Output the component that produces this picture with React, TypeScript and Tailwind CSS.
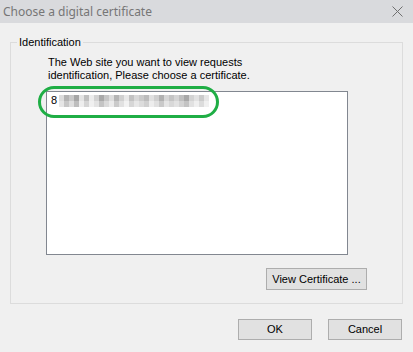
import React from "react";

const sans = "font-['Liberation_Sans',Arial,sans-serif]";

// pixelated blur that hides the certificate name (two rows of cells)
const topRow = [
  "#dcdcdc", "#b3b3b3", "#c8c8c8", "#a6a6a6", "#e4e4e4", "#c0c0c0", "#ececec", "#d2d2d2",
  "#a9a9a9", "#c6c6c6", "#dddddd", "#b5b5b5", "#d0d0d0", "#e8e8e8", "#c2c2c2", "#d8d8d8",
  "#cacaca", "#bcbcbc", "#e0e0e0", "#cfcfcf", "#b1b1b1", "#d6d6d6", "#c4c4c4", "#d4d4d4",
  "#bfbfbf", "#a8a8a8", "#d3d3d3", "#e2e2e2", "#cbcbcb", "#e6e6e6",
];
const bottomRow = [
  "#e6e6e6", "#c7c7c7", "#dedede", "#bdbdbd", "#eeeeee", "#d5d5d5", "#f0f0f0", "#e3e3e3",
  "#c4c4c4", "#dadada", "#ebebeb", "#cacaca", "#e1e1e1", "#f2f2f2", "#d6d6d6", "#e7e7e7",
  "#dcdcdc", "#d0d0d0", "#ededed", "#e0e0e0", "#c9c9c9", "#e5e5e5", "#d8d8d8", "#e2e2e2",
  "#d3d3d3", "#c3c3c3", "#e1e1e1", "#efefef", "#dcdcdc", "#f0f0f0",
];

function Button({ label, className }: { label: string; className: string }) {
  return (
    <button
      className={`${className} flex items-center justify-center border border-[#adadad] bg-[#e1e1e1] text-[11px] leading-none text-black ${sans}`}
    >
      {label}
    </button>
  );
}

export default function App() {
  return (
    <div className="flex h-[352px] w-[413px] flex-col bg-[#f0f0f0]">
      {/* title bar */}
      <div className="flex h-[23px] items-center justify-between bg-[#d9dadd] pl-[3px] pr-[10px]">
        <span className="font-['Noto_Sans',sans-serif] text-[12px] leading-none text-[#767676]">
          Choose a digital certificate
        </span>
        <svg width="11" height="11" viewBox="0 0 11 11">
          <path d="M0.5 0.5 L10.5 10.5 M10.5 0.5 L0.5 10.5" stroke="#6f6f6f" strokeWidth="1" />
        </svg>
      </div>

      <fieldset className="mx-[10px] mt-[13px] h-[268px] border border-[#dcdcdc] px-0 pb-0">
        <legend className={`ml-[6px] px-[2px] text-[11px] leading-[13px] text-black ${sans}`}>
          Identification
        </legend>
        <p className={`mt-[7px] ml-[37px] text-[11px] leading-[13px] text-black ${sans}`}>
          The Web site you want to view requests
          <br />
          identification, Please choose a certificate.
        </p>
        <div className="relative mt-[9px] ml-[35px] h-[164px] w-[302px] border border-[#828790] bg-white">
          <div className="flex h-[15px] items-center pl-[4px] pt-[2px]">
            <span className={`text-[11px] leading-none text-black ${sans}`}>8</span>
            <div className="ml-[2px] flex flex-col">
              <div className="flex h-[6px]">
                {topRow.map((c, i) => (
                  <div key={i} className="h-full w-[5px]" style={{ backgroundColor: c }} />
                ))}
              </div>
              <div className="flex h-[6px]">
                {bottomRow.map((c, i) => (
                  <div key={i} className="h-full w-[5px]" style={{ backgroundColor: c }} />
                ))}
              </div>
            </div>
          </div>
          {/* highlight ring drawn over the first row */}
          <div className="absolute left-[-9px] top-[-6px] h-[32px] w-[181px] rounded-[16px] border-[3px] border-[#1fae45]" />
        </div>
        <div className="mt-[13px] mr-[35px] flex justify-end">
          <Button label="View Certificate ..." className="h-[22px] w-[101px]" />
        </div>
      </fieldset>

      <div className="mt-[15px] flex justify-end gap-[16px] pr-[11px]">
        <Button label="OK" className="h-[21px] w-[74px]" />
        <Button label="Cancel" className="h-[21px] w-[74px]" />
      </div>
    </div>
  );
}
